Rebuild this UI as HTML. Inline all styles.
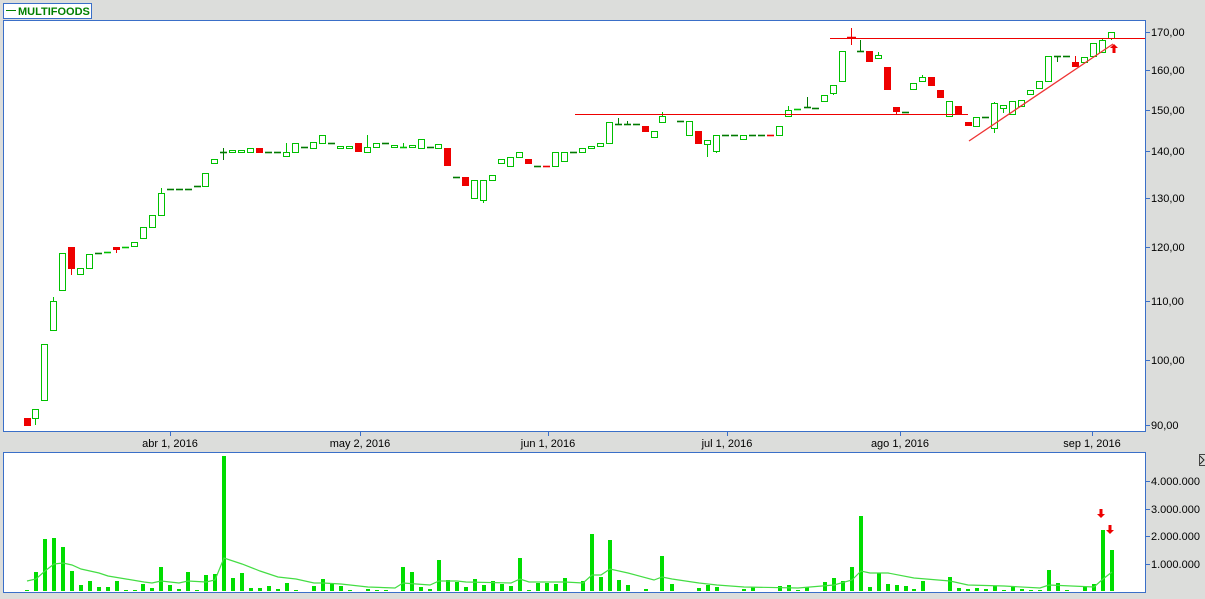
<!DOCTYPE html>
<html><head><meta charset="utf-8"><style>
body{margin:0;background:#dcdddb;width:1205px;height:599px;overflow:hidden;font-family:"Liberation Sans",sans-serif}
svg{position:absolute;left:0;top:0}
</style></head><body>
<svg id="s" width="1205" height="599" xmlns="http://www.w3.org/2000/svg" font-family="Liberation Sans, sans-serif" font-size="11">
<rect x="3.5" y="20.5" width="1142" height="411" fill="#fff" stroke="#3a6fc8"/>
<rect x="3.5" y="452.5" width="1142" height="140" fill="#fff" stroke="#3a6fc8"/>
<rect x="3.5" y="3.5" width="88" height="15" fill="#fff" stroke="#3a6fc8"/>
<line x1="6" y1="10.5" x2="16" y2="10.5" stroke="#008000"/>
<text x="18" y="15" font-weight="bold" font-size="11" fill="#008000">MULTIFOODS</text>
<g id="lab"></g>
<g id="c"></g>
<g id="v"></g>
<line x1="830" y1="38.5" x2="1145" y2="38.5" stroke="#ee0000"/>
<line x1="575" y1="114.5" x2="968" y2="114.5" stroke="#ee0000"/>
<line x1="969" y1="141" x2="1113" y2="44" stroke="#ee3333" stroke-width="1.3"/>
<path d="M1114 44 l-4 4 h2.5 v5 h3 v-5 h2.5z" fill="#ee0000"/>
<path d="M1101 518 l-4 -4 h2.5 v-5 h3 v5 h2.5z" fill="#ee0000"/>
<path d="M1110 534 l-4 -4 h2.5 v-5 h3 v5 h2.5z" fill="#ee0000"/>
<rect x="1199.5" y="454.5" width="7" height="11" fill="#dcdddb" stroke="#444"/>
<path d="M1200 456 l4 4 -4 4" stroke="#222" fill="none"/>
</svg>
<script>
var NS="http://www.w3.org/2000/svg";
function el(p,t,a){var e=document.createElementNS(NS,t);for(var k in a)e.setAttribute(k,a[k]);p.appendChild(e);return e}
var C=document.getElementById('c'),V=document.getElementById('v'),L=document.getElementById('lab');
var d=[[27,418,426,'r'],[35,409,418,'g',0,425],[44,344,400,'g'],[53,301,330,'g',297,0],[62,253,290,'g'],[71,247,269,'r',0,275],[80,268,274,'g'],[89,254,268,'g'],[98,253,253,'d'],[107,252,253,'g'],[116,247,250,'r',0,253],[125,247,247,'g'],[134,242,246,'g'],[143,227,238,'g'],[152,215,227,'g'],[161,193,215,'g',188,0],[170,189,189,'d'],[179,189,189,'d'],[188,189,189,'d'],[197,186,186,'d'],[205,173,186,'g'],[214,159,163,'g'],[223,152,152,'d',148,160],[232,150,152,'g'],[241,150,152,'g'],[250,148,152,'g'],[259,148,153,'r'],[268,152,152,'d'],[277,152,152,'d'],[286,152,156,'g',143,0],[295,143,152,'g'],[304,147,147,'d'],[313,142,148,'g'],[322,135,143,'g'],[331,143,143,'d'],[340,146,148,'g'],[349,146,148,'g'],[358,143,152,'r'],[367,147,152,'g',135,0],[376,143,147,'g'],[385,143,143,'d'],[394,145,147,'g'],[403,147,147,'g',143,0],[412,145,147,'g'],[421,139,148,'g'],[430,147,147,'d'],[438,144,148,'g'],[447,148,166,'r'],[456,177,177,'d'],[465,177,186,'r'],[474,180,198,'g'],[483,180,200,'g',0,203],[492,175,180,'g'],[501,159,163,'g'],[510,157,166,'g'],[519,152,157,'g'],[528,159,164,'r'],[537,166,166,'d'],[546,166,166,'rd'],[555,152,166,'g'],[564,152,161,'g'],[573,152,152,'d'],[582,148,152,'g'],[591,146,148,'g'],[600,143,146,'g'],[609,122,143,'g'],[618,124,124,'d',118,0],[627,124,124,'d',121,0],[636,124,124,'d'],[645,126,132,'r'],[654,131,137,'g'],[662,116,122,'g',112,0],[680,121,121,'d'],[689,121,135,'g'],[698,131,144,'r'],[707,140,144,'g',0,157],[716,135,151,'g',0,153],[725,135,135,'d'],[734,135,135,'d'],[743,135,139,'g'],[752,135,135,'d'],[761,135,135,'d'],[770,135,135,'rd'],[779,126,135,'g'],[788,110,116,'g',106,0],[797,109,109,'g'],[807,107,107,'d',97,0],[815,108,108,'d'],[824,95,101,'g'],[833,85,93,'g',0,95],[842,51,81,'g'],[851,37,37,'rx',28,45],[860,51,51,'d',40,0],[869,51,62,'r'],[878,55,58,'g',52,0],[887,67,90,'r'],[896,107,112,'r',0,114],[905,112,112,'d'],[913,83,89,'g'],[922,77,81,'g',75,0],[931,77,86,'r'],[940,90,98,'r'],[949,101,116,'g'],[958,106,115,'r'],[968,122,126,'r'],[976,117,126,'g'],[985,117,117,'d'],[994,103,128,'g',102,133],[1003,105,108,'g',0,113],[1012,101,114,'g'],[1021,100,106,'g'],[1030,90,94,'g'],[1039,81,88,'g'],[1048,56,81,'g'],[1057,56,56,'d',0,62],[1066,56,56,'d'],[1075,62,67,'r',56,0],[1084,57,62,'g'],[1093,43,56,'g'],[1102,40,52,'g',38,0],[1111,32,38,'g',0,40]];
d.forEach(function(a){var x=a[0],t=a[1],b=a[2],c=a[3],wt=a[4]||0,wb=a[5]||0;
var col=(c=='r'||c=='rd'||c=='rx')?'#ee0000':(c=='d'?'#007a00':'#00c000');
if(wt)el(C,'line',{x1:x+.5,x2:x+.5,y1:wt,y2:t,stroke:col});
if(wb)el(C,'line',{x1:x+.5,x2:x+.5,y1:b,y2:wb,stroke:col});
if(c=='r')el(C,'rect',{x:x-3,y:t,width:7,height:Math.max(b-t,2),fill:col});
else if(c=='g'&&b-t>=2)el(C,'rect',{x:x-2.5,y:t+.5,width:6,height:b-t,fill:'#fff',stroke:col});
else if(c=='rx'){el(C,'line',{x1:x-4,x2:x+5,y1:t+.5,y2:t+.5,stroke:col,'stroke-width':1.5})}
else el(C,'line',{x1:x-3,x2:x+4,y1:t+.5,y2:t+.5,stroke:col,'stroke-width':1.6});});
var v=[[27,590],[36,572],[45,539],[54,538],[63,547],[72,571],[81,585],[90,581],[99,587],[108,587],[117,581],[126,590],[135,590],[143,584],[152,588],[161,567],[170,585],[179,589],[188,572],[197,590],[206,575],[215,574],[224,456],[233,578],[242,573],[251,588],[260,588],[269,586],[278,589],[287,583],[296,590],[314,586],[323,579],[332,584],[341,586],[350,590],[368,589],[377,590],[386,590],[403,567],[412,572],[421,587],[430,589],[439,560],[448,580],[457,582],[466,587],[475,579],[484,585],[493,581],[502,584],[511,586],[520,558],[529,590],[538,583],[547,583],[556,584],[565,578],[583,581],[592,534],[601,577],[610,540],[619,580],[628,585],[646,589],[662,556],[672,584],[699,588],[708,585],[717,587],[744,589],[753,587],[780,586],[789,585],[798,590],[807,587],[825,582],[834,578],[843,581],[852,567],[861,516],[870,587],[879,573],[888,584],[897,585],[906,586],[914,589],[923,581],[950,577],[959,588],[968,589],[977,588],[986,589],[995,586],[1004,590],[1013,587],[1022,589],[1031,590],[1040,590],[1049,570],[1058,583],[1067,590],[1085,587],[1094,584],[1103,530],[1112,550]];
v.forEach(function(a){el(V,'rect',{x:a[0]-2,y:a[1],width:4,height:591-a[1],fill:'#00dd00'})});
var m="27,581 36,579 45,571 54,564 63,563 72,565 81,569 99,573 108,576 126,579 144,582 152,583 161,581 179,583 188,581 206,582 215,580 224,558 242,564 260,571 278,577 296,579 314,583 323,583 341,584 368,587 395,588 403,583 430,585 439,581 457,581 466,582 511,583 520,579 529,582 565,582 583,583 592,575 601,575 610,569 628,573 654,580 662,577 672,579 699,583 717,585 744,587 798,588 834,585 852,580 861,571 870,573 888,573 914,578 950,581 968,585 1004,586 1040,588 1049,585 1094,587 1103,579 1112,572";
el(V,'polyline',{points:m,fill:'none',stroke:'#44dd44','stroke-width':1.2});
[[32,'170,00'],[70,'160,00'],[110,'150,00'],[151,'140,00'],[198,'130,00'],[247,'120,00'],[301,'110,00'],[360,'100,00'],[425,'90,00']].forEach(function(a){
el(L,'line',{x1:1146,x2:1150,y1:a[0]+.5,y2:a[0]+.5,stroke:'#3a6fc8'});var t=el(L,'text',{x:1151,y:a[0]+4});t.textContent=a[1];});
[[481,'4.000.000'],[509,'3.000.000'],[536,'2.000.000'],[564,'1.000.000']].forEach(function(a){
el(L,'line',{x1:1146,x2:1150,y1:a[0]+.5,y2:a[0]+.5,stroke:'#3a6fc8'});var t=el(L,'text',{x:1151,y:a[0]+4});t.textContent=a[1];});
[[170,'abr 1, 2016'],[360,'may 2, 2016'],[548,'jun 1, 2016'],[727,'jul 1, 2016'],[900,'ago 1, 2016'],[1092,'sep 1, 2016']].forEach(function(a){
el(L,'line',{x1:a[0]+.5,x2:a[0]+.5,y1:432,y2:436,stroke:'#3a6fc8'});var t=el(L,'text',{x:a[0],y:447,'text-anchor':'middle'});t.textContent=a[1];});
</script>
</body></html>
